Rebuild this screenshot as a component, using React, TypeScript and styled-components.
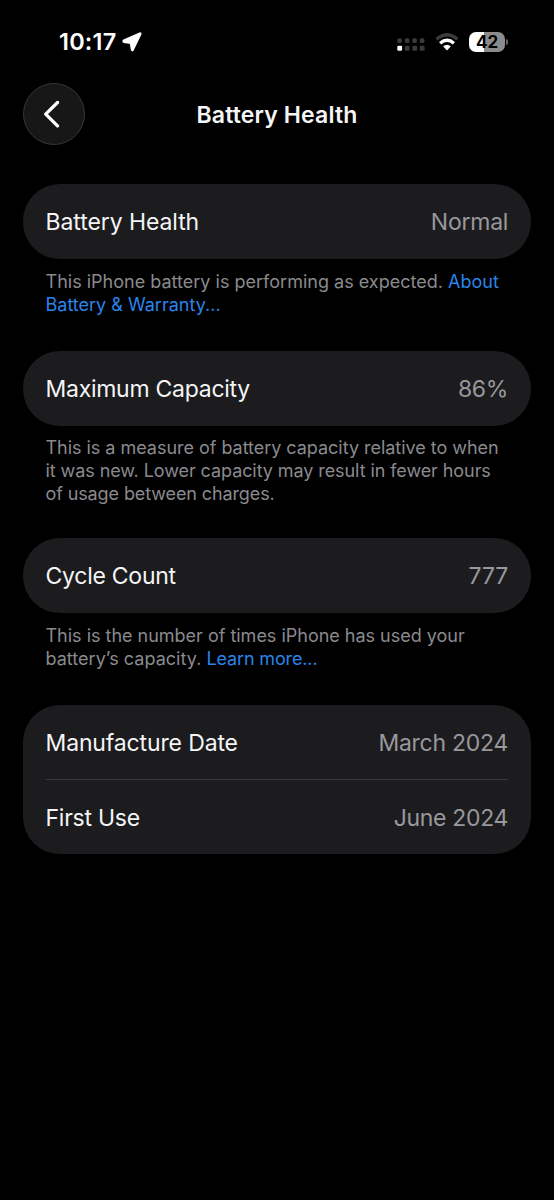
import React from 'react';
import styled, { createGlobalStyle } from 'styled-components';

const Global = createGlobalStyle`
  * { box-sizing: border-box; }
  body { margin: 0; background: #000; font-family: Inter, "Liberation Sans", sans-serif; color: #f5f5f7; }
`;
const Screen = styled.main`
  width: 554px; min-height: 1200px; background: #000; padding: 0 23px;
`;
const StatusBar = styled.div`
  height: 83px; padding: 0 23px 0 36px; display: flex; align-items: center; justify-content: space-between;
`;
const Time = styled.div`
  display: flex; align-items: center; gap: 6px; font-size: 23.5px; font-weight: 600; letter-spacing: 0.2px; color: #fff;
`;
const Indicators = styled.div`
  display: flex; align-items: center;
`;
const Signal = styled.svg`
  margin-top: 6px;
`;
const Wifi = styled.svg`
  margin-left: 10px;
`;
const Battery = styled.div`
  display: flex; align-items: center; gap: 1px; margin-left: 10px;
`;
const Level = styled.div`
  width: 36px; height: 20px; border-radius: 7px; font-size: 17px; line-height: 20px; font-weight: 700; text-align: center;
  letter-spacing: -0.1px; color: #000; background: linear-gradient(90deg, #fff 42%, #8b8b8b 42%);
`;
const Cap = styled.div`
  width: 2px; height: 6px; border-radius: 0 2px 2px 0; background: #666;
`;
const NavBar = styled.header`
  height: 62px; display: grid; grid-template-columns: 62px 1fr 62px; align-items: center;
`;
const Back = styled.button`
  width: 62px; height: 62px; border-radius: 50%; border: 1px solid #363638; background: #171718; padding: 0 4px 0 0;
  display: flex; align-items: center; justify-content: center;
`;
const Title = styled.h1`
  margin: 0; padding-top: 1px; text-align: center; font-size: 23px; font-weight: 600; letter-spacing: 0.15px;
`;
const Content = styled.div`
  padding-top: 39px;
`;
const Section = styled.section<{ $h: number }>`
  height: ${p => p.$h}px;
`;
const Card = styled.div`
  background: #1c1c1e; border-radius: 37px; padding: 0 23px;
`;
const Row = styled.div<{ $line?: boolean }>`
  height: 74.5px; padding-top: 2px; display: flex; align-items: center; justify-content: space-between; font-size: 23px;
  border-bottom: ${p => (p.$line ? '1px solid #3a3a3c' : 'none')};
`;
const Label = styled.span<{ $ls: number }>`
  margin-left: -0.5px; letter-spacing: ${p => p.$ls}px;
`;
const Value = styled.span<{ $ls: number }>`
  color: #98989d; letter-spacing: ${p => p.$ls}px; margin-right: ${p => -p.$ls - 0.4}px;
`;
const Note = styled.p<{ $top?: number }>`
  margin: 0; padding: ${p => p.$top ?? 11}px 0 0 22.5px; font-size: 18px; line-height: 23px;
  color: #8a8a8e; white-space: nowrap;
`;
const Line = styled.span<{ $ls: number }>`
  display: block; letter-spacing: ${p => p.$ls}px;
`;
const Link = styled.a<{ $ls?: number }>`
  color: #2b84ea; letter-spacing: ${p => (p.$ls === undefined ? 'inherit' : `${p.$ls}px`)};
`;

export default function App() {
  return (
    <Screen>
      <Global />
      <StatusBar>
        <Time>
          10:17
          <svg width="20" height="20" viewBox="0 0 20 20"><path d="M17.9 1.4 1.8 8.6q-.7.6.1 1.2l6.9 1 1.1 7q.4.9.9.1L18.4 2q.1-.8-.5-.6Z" fill="#fff" stroke="#fff" strokeWidth="2.2" strokeLinejoin="round" /></svg>
        </Time>
        <Indicators>
          <Signal width="28" height="14" viewBox="0 0 28 14">
            {[0, 1, 2, 3].map(i => <rect key={i} x={0.3 + i * 7.5} y="0.3" width="4.6" height="4.8" rx="1.5" fill="#3a3a3a" />)}
            {[0, 1, 2, 3].map(i => <rect key={i} x={0.3 + i * 7.5} y="7.8" width="4.8" height="5" rx="1.2" fill={i ? '#3a3a3a' : '#fff'} />)}
          </Signal>
          <Wifi width="24" height="18" viewBox="0 0 24 18" fill="none" strokeWidth="3.4">
            <path d="M1.5 6.3Q12-2.8 22.5 6.3" stroke="#3c3c3c" /><path d="M5.1 10.2q6.9-5.8 13.8 0" stroke="#fff" /><path d="m8.1 13.3 3.9 4.2 3.9-4.2q-3.9-3.2-7.8 0Z" fill="#fff" />
          </Wifi>
          <Battery><Level>42</Level><Cap /></Battery>
        </Indicators>
      </StatusBar>
      <NavBar>
        <Back aria-label="Back">
          <svg width="18" height="28" viewBox="0 0 18 28" fill="none" stroke="#fff" strokeWidth="3.3" strokeLinecap="round" strokeLinejoin="round"><path d="M14.5 2.5 2.7 14.2l11.8 11.7" /></svg>
        </Back>
        <Title>Battery Health</Title>
      </NavBar>
      <Content>
        <Section $h={167}>
          <Card><Row><Label $ls={-0.08}>Battery Health</Label><Value $ls={-0.25}>Normal</Value></Row></Card>
          <Note>
            <Line $ls={0.01}>This iPhone battery is performing as expected. <Link>About</Link></Line>
            <Line $ls={0}><Link>Battery &amp; Warranty...</Link></Line>
          </Note>
        </Section>
        <Section $h={187}>
          <Card><Row><Label $ls={-0.27}>Maximum Capacity</Label><Value $ls={-0.3}>86%</Value></Row></Card>
          <Note $top={10}>
            <Line $ls={-0.03}>This is a measure of battery capacity relative to when</Line>
            <Line $ls={-0.08}>it was new. Lower capacity may result in fewer hours</Line>
            <Line $ls={-0.11}>of usage between charges.</Line>
          </Note>
        </Section>
        <Section $h={167}>
          <Card><Row><Label $ls={-0.26}>Cycle Count</Label><Value $ls={0}>777</Value></Row></Card>
          <Note>
            <Line $ls={-0.01}>This is the number of times iPhone has used your</Line>
            <Line $ls={0.03}>battery’s capacity. <Link $ls={-0.14}>Learn more...</Link></Line>
          </Note>
        </Section>
        <Card>
          <Row $line><Label $ls={-0.14}>Manufacture Date</Label><Value $ls={-0.25}>March 2024</Value></Row>
          <Row><Label $ls={-0.25}>First Use</Label><Value $ls={-0.33}>June 2024</Value></Row>
        </Card>
      </Content>
    </Screen>
  );
}
